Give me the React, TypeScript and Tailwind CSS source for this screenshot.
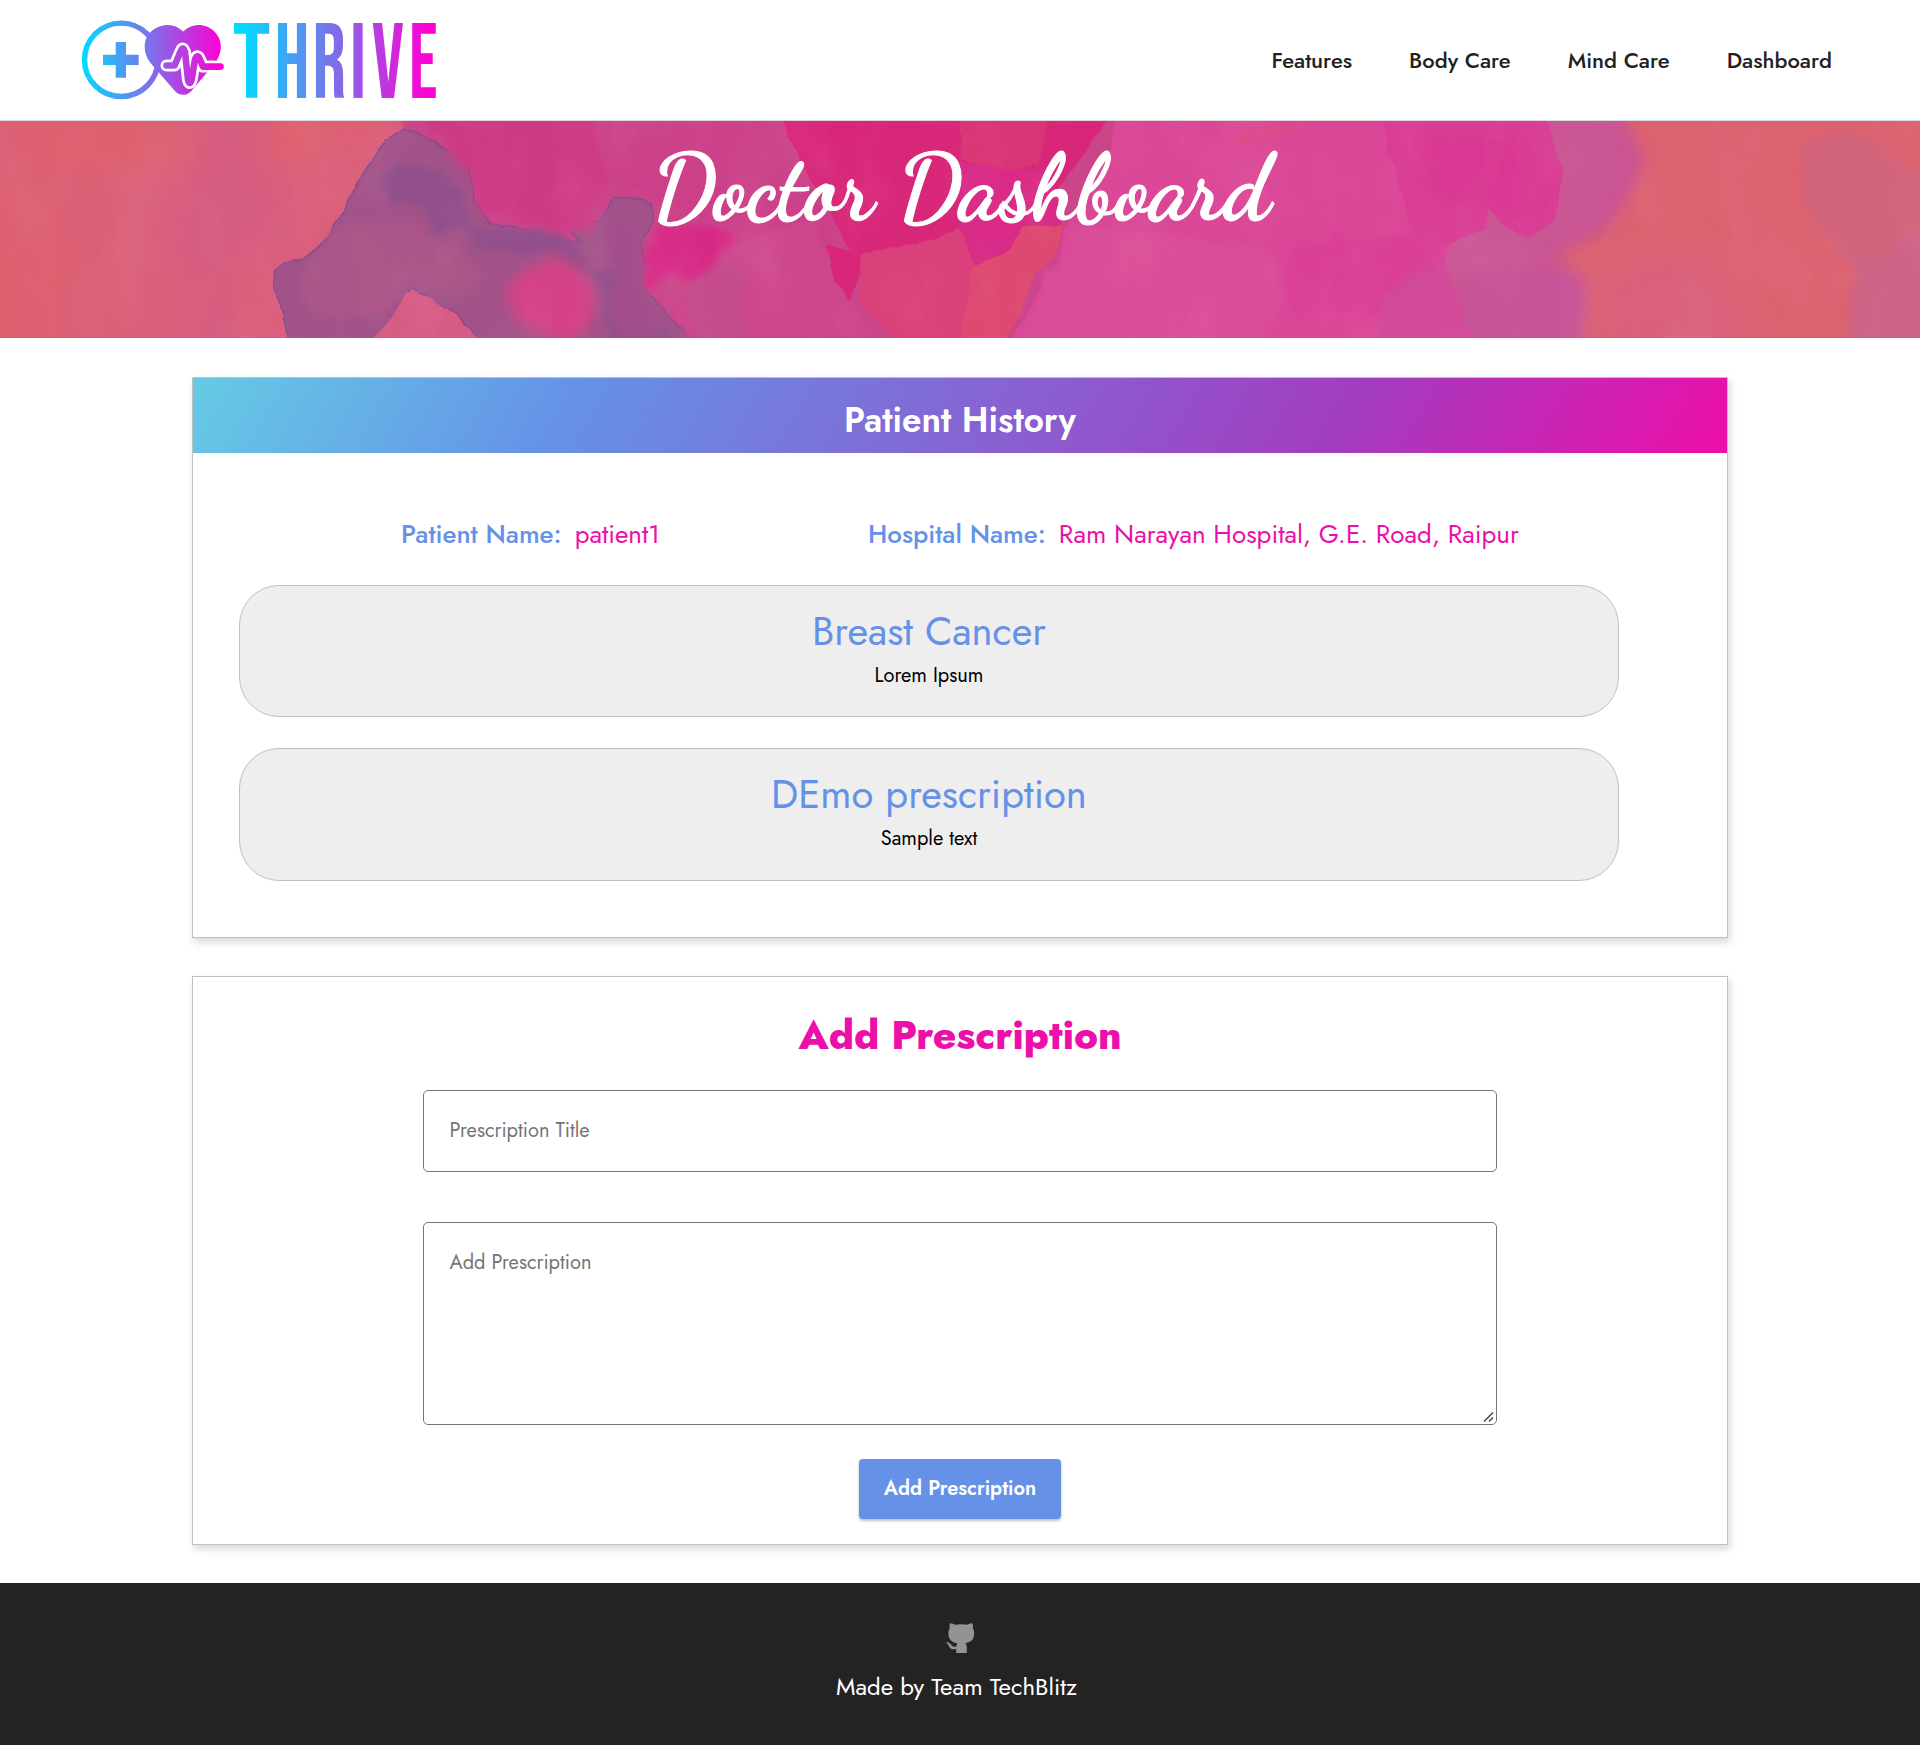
const navLinks = ["Features", "Body Care", "Mind Care", "Dashboard"];
const history = [
  { title: "Breast Cancer", text: "Lorem Ipsum" },
  { title: "DEmo prescription", text: "Sample text" },
];
const wordmark = [
  { letter: "T", x: 232.7, width: 37.7 },
  { letter: "H", x: 274.4, width: 34.95 },
  { letter: "R", x: 312.4, width: 33.5 },
  { letter: "I", x: 350, width: 16 },
  { letter: "V", x: 371.8, width: 32.2 },
  { letter: "E", x: 408.9, width: 28.5 },
];

function Logo() {
  return (
    <svg className="h-[84px] w-[362px] overflow-visible" viewBox="78 18 362 84" aria-label="Thrive">
      <defs>
        <linearGradient id="markFill" gradientUnits="userSpaceOnUse" x1="82" y1="0" x2="222" y2="0">
          <stop offset="0" stopColor="#00dcff" />
          <stop offset="1" stopColor="#ff00d4" />
        </linearGradient>
        <linearGradient id="wordFill" gradientUnits="userSpaceOnUse" x1="240" y1="0" x2="430" y2="0">
          <stop offset="0" stopColor="#00dcff" />
          <stop offset="1" stopColor="#ff00d4" />
        </linearGradient>
      </defs>
      <circle cx="121.2" cy="59.8" r="36.7" fill="none" stroke="url(#markFill)" strokeWidth="5.4" />
      <path d="M115.7 42h10.3v12.7h12.7V65H126v12.7h-10.3V65H103V54.7h12.7Z" fill="url(#markFill)" />
      <path
        d="M183.2 31.6C178.5 27 173.500 25 168 25C155 25 144.700 34.500 144.700 46.500C144.700 54 147.600 59.500 152 64.700L174.500 90.500C179 96 186.500 96.300 191.200 91.200L212.500 66C218 59.500 220.800 54 220.800 46.500C220.800 34.500 210.500 25 198.500 25C192.500 25 187.500 27.200 183.200 31.600Z"
        fill="url(#markFill)"
      />
      <g fill="none" strokeLinecap="round" strokeLinejoin="round">
        <path d="M166.500 65.500H174.600L180.600 51.200Q183 45.500 185 52L188 80Q189.700 86 191.600 80L195 59.300Q197.400 53.500 199.800 59L203 66.600H214" stroke="#fff" strokeWidth="12" />
        <path d="M166.500 65.500H174.600L180.600 51.200Q183 45.500 185 52L188 80Q189.700 86 191.600 80L195 59.300Q197.400 53.500 199.800 59L203 66.600H220.500" stroke="url(#markFill)" strokeWidth="6.600" />
      </g>
      <g fill="url(#wordFill)" fontSize="106.700" className="font-['Bebas_Neue','Roboto_Condensed',sans-serif]">
        {wordmark.map((glyph) => (
          <text key={glyph.letter} x={glyph.x} y="97.700" textLength={glyph.width} lengthAdjust="spacingAndGlyphs">{glyph.letter}</text>
        ))}
      </g>
    </svg>
  );
}

function Watercolor() {
  return (
    <svg className="absolute inset-0 h-full w-full" viewBox="0 0 1920 217" preserveAspectRatio="none" aria-hidden="true">
      <defs>
        <filter id="rough" x="-5%" y="-10%" width="110%" height="120%">
          <feTurbulence type="fractalNoise" baseFrequency="0.04" numOctaves="4" seed="4" result="n" />
          <feDisplacementMap in="SourceGraphic" in2="n" scale="7" xChannelSelector="R" yChannelSelector="G" />
        </filter>
        <filter id="washed" x="-10%" y="-15%" width="120%" height="130%">
          <feTurbulence type="fractalNoise" baseFrequency="0.03" numOctaves="4" seed="9" result="n" />
          <feDisplacementMap in="SourceGraphic" in2="n" scale="28" xChannelSelector="R" yChannelSelector="G" />
          <feGaussianBlur stdDeviation="3.5" />
        </filter>
        <filter id="soft" x="-30%" y="-30%" width="160%" height="160%"><feGaussianBlur stdDeviation="7" /></filter>
        <filter id="softer" x="-30%" y="-30%" width="160%" height="160%"><feGaussianBlur stdDeviation="16" /></filter>
        <filter id="grain" x="0" y="0" width="100%" height="100%">
          <feTurbulence type="fractalNoise" baseFrequency="0.018 0.01" numOctaves="5" seed="12" />
          <feColorMatrix values="0 0 0 0 0.9  0 0 0 0 0.38  0 0 0 0 0.55  1.6 0 0 0 -0.72" />
        </filter>
        <linearGradient id="wash" x1="0" x2="1" y1="0" y2="0">
          <stop offset="0" stopColor="#dc5f74" />
          <stop offset="0.06" stopColor="#db6077" />
          <stop offset="0.13" stopColor="#d75d80" />
          <stop offset="0.2" stopColor="#da5f7a" />
          <stop offset="0.24" stopColor="#cb4585" />
          <stop offset="0.34" stopColor="#cc4288" />
          <stop offset="0.5" stopColor="#d93381" />
          <stop offset="0.56" stopColor="#da4596" />
          <stop offset="0.8" stopColor="#d94196" />
          <stop offset="1" stopColor="#dc5f74" />
        </linearGradient>
      </defs>
      <rect width="1920" height="217" fill="url(#wash)" />
      <g filter="url(#softer)">
        <ellipse cx="110" cy="25" rx="90" ry="26" fill="#de606d" />
        <ellipse cx="30" cy="150" rx="30" ry="70" fill="#dd616c" />
        <ellipse cx="325" cy="20" rx="60" ry="35" fill="#df606b" />
        <ellipse cx="220" cy="110" rx="40" ry="90" fill="#d65c82" />
        <ellipse cx="265" cy="180" rx="60" ry="50" fill="#dc5e7a" />
        <ellipse cx="345" cy="70" rx="40" ry="70" fill="#db5f78" />
      </g>
      <g filter="url(#washed)">
        <path d="M205 -5L212 60L206 120L212 170L196 225H236L240 -5Z" fill="#d75d80" />
        <path d="M62 70L66 150L60 225H0V70Z" fill="#dd616f" />
      </g>
      <g filter="url(#rough)">
        <path d="M400 -5L408 14L470 40L474 80L490 105L570 122L590 75L610 80L640 100L645 180L690 225H1230L1180 -5Z" fill="#cb4489" />
        <path d="M405 8L380 28L358 60L342 92L324 120L312 134L304 138L284 142L274 150L275 170L284 190L288 225H366L392 200L404 178L411 168L428 176L458 192L466 206L486 225H700L662 190L644 165L642 125L655 100L650 80L612 76L600 100L570 108L580 122L550 115L520 109L490 102L474 76L468 42L430 18Z" fill="#a15289" stroke="#864c90" strokeWidth="1.500" />
      </g>
      <g filter="url(#washed)">
        <path d="M404 -12L440 14L468 45L478 84L510 96L560 119L592 108L600 70L605 20L590 -12Z" fill="#cd3b84" />
        <path d="M392 40L440 50L466 74L474 110L436 108L402 84L384 62Z" fill="#914f8b" />
        <path d="M340 104L390 98L440 118L480 144L474 180L412 156L380 190L310 200L300 150Z" fill="#aa5587" />
        <path d="M470 104L560 118L592 140L630 180L690 228H614L596 150L560 136L480 126Z" fill="#92508c" />
        <path d="M602 92L640 104L644 165L670 200L630 222L606 160Z" fill="#a34f8b" />
      </g>
      <path d="M406 172L390 200L368 222H484L464 205L456 192L430 176Z" fill="#d75c84" filter="url(#rough)" />
      <path d="M505 170Q520 145 560 136Q590 150 596 180Q592 212 570 222Q512 212 505 170Z" fill="#d44385" filter="url(#soft)" />
      <path d="M655 102L735 108L728 140L700 158L664 156L648 172L642 140Z" fill="#d72c86" filter="url(#washed)" />
      <g filter="url(#washed)">
        <path d="M600 20L690 0L770 0L800 60L840 100L840 130L740 110L650 80L610 60Z" fill="#cb4089" />
        <path d="M735 120L820 100L845 180L880 228H700L680 190Z" fill="#ce478d" />
        <path d="M690 160L730 140L760 228H690Z" fill="#c44b8d" />
      </g>
      <g filter="url(#rough)">
        <path d="M780 -5L800 40L830 90L850 130L826 122L834 160L850 180L866 132L930 124L975 100L1030 110L1110 -5Z" fill="#d82879" />
        <path d="M862 134L935 118L970 106L985 145L1005 225H900L860 180Z" fill="#da4179" />
        <path d="M960 40L1050 50L1062 105L1020 108L1015 130L975 144L960 110Z" fill="#d82a86" />
        <path d="M960 -5H1048L1040 40L1010 50L960 38Z" fill="#d93475" />
        <path d="M1022 106L1064 104L1056 130L1036 155L1005 222H960L972 146L1012 126Z" fill="#dd4871" />
        <path d="M1116 -5L1110 30L1066 105L1055 145L1008 225H1480L1440 -5Z" fill="#da4697" />
        <path d="M1380 -5H1545L1562 50L1555 100L1528 116L1505 105L1488 90L1480 112L1450 122L1420 140Z" fill="#d93d94" />
      </g>
      <g filter="url(#washed)">
        <path d="M1140 110L1260 125L1280 150L1270 224H1016L1058 146L1076 110Z" fill="#da4d98" />
        <path d="M1400 10L1530 20L1545 80L1520 96L1430 70Z" fill="#d93792" />
        <path d="M1285 120L1440 110L1450 170L1400 200L1290 190Z" fill="#da4095" />
        <path d="M1232 12L1280 5L1292 12L1236 28Z" fill="#db4a84" />
        <path d="M1400 165L1450 140L1470 224H1370Z" fill="#d14a99" />
      </g>
      <path d="M1546 -5L1562 50L1555 99L1529 116L1505 106L1488 88L1484 110L1450 122L1446 145L1462 185L1474 225H1600L1680 90L1630 -5Z" fill="#ca5593" filter="url(#rough)" />
      <path d="M1456 152L1500 146L1560 155L1590 180L1580 226H1476L1462 185Z" fill="#c55297" filter="url(#washed)" />
      <path d="M1622 -10L1645 40L1628 78L1603 112L1556 136L1588 158L1590 190L1580 227H1930V-10Z" fill="#dc6270" filter="url(#soft)" />
      <g filter="url(#softer)">
        <path d="M1600 150L1700 130L1760 225H1600Z" fill="#da607c" />
      </g>
      <g filter="url(#washed)">
        <path d="M1800 30L1830 10L1870 14L1890 40L1935 50V228H1850L1856 150L1810 90Z" fill="#d1647a" />
        <path d="M1858 140L1930 110V228H1846Z" fill="#cc6484" />
      </g>
      <rect width="1920" height="217" filter="url(#grain)" opacity="0.14" />
    </svg>
  );
}

function GithubCat() {
  return (
    <svg className="h-[30px] w-[29px]" viewBox="0 0 29 30" fill="#939393" aria-hidden="true">
      <path d="M4.200 .2C6 .1 7.600 1 9 1.800C12.500 1.100 17.500 1.100 21 1.800C22.400 1 24.500 .1 26.200 .2C27.200 2 27.200 4 26.800 5.200C28.600 7.600 28.600 12 27.200 15.200C26 18 23 19.600 19.400 20.200C20.400 21.400 20.800 23 20.800 25V30H10.200V26C6 27 4 25.600 3 23.200C2.200 21.400 1.200 20.200 .2 19.400C2.200 18.600 4 20 5 21.600C6.200 23.400 7.600 24.200 10.200 23.600C10.400 22 10.800 21 11.400 20.200C7.600 19.600 4.800 18.200 3.400 15.200C2 12 2 7.600 3.800 5.200C3.200 3.600 3.400 1.800 4.200 .2Z" />
    </svg>
  );
}

export default function App() {
  return (
    <div className="min-h-[1745px] bg-white font-[Jost,Lato,sans-serif] text-black">
      <header className="flex h-[121px] items-center justify-between border-b border-[#d9d9d9] pr-[88px] pl-[78px]">
        <Logo />
        <nav className="flex gap-[57px] text-[22px] font-medium leading-8 text-[#222]">
          {navLinks.map((link) => (
            <a key={link} href="#">{link}</a>
          ))}
        </nav>
      </header>

      <section className="relative flex h-[217px] justify-center overflow-hidden bg-[#d94088]">
        <Watercolor />
        <h1 className="relative pt-[10px] pl-[2px] font-['Dancing_Script',cursive] text-[92px] font-bold leading-[115px] text-white [-webkit-text-stroke:1px_white]">Doctor Dashboard</h1>
      </section>

      <main className="mx-auto flex w-[1536px] flex-col gap-[38px] pt-[39px] pb-[38px]">
        <section className="h-[561px] border border-[#c0c0c0] shadow-[2px_4px_8px_rgba(0,0,0,0.16)]">
          <h2 className="h-[75px] bg-[linear-gradient(120deg,#65cbe5_0%,#6591e7_25%,#a33cbf_75%,#ee0ea9_100%)] pt-[9px] text-center text-[35px] font-semibold leading-[67px] text-white">Patient History</h2>
          <div className="mt-[61px] mb-[31px] flex justify-evenly text-[26px] leading-10">
            <p className="text-[#ec0fa9]"><span className="mr-[13px] font-medium text-[#6591e7]">Patient Name:</span>patient1</p>
            <p className="text-[#ec0fa9]"><span className="mr-[13px] font-medium text-[#6591e7]">Hospital Name:</span>Ram Narayan Hospital, G.E. Road, Raipur</p>
          </div>
          <ul className="ml-[46px] flex w-[1380px] flex-col gap-[31px]">
            {history.map((item) => (
              <li key={item.title} className="h-[132.4px] rounded-[40px] border border-[#c0c0c0] bg-[#eee] pt-[16px] text-center">
                <h3 className="text-[40px] leading-[58px] text-[#6591e7]">{item.title}</h3>
                <p className="pt-px text-[20px] leading-[29px]">{item.text}</p>
              </li>
            ))}
          </ul>
        </section>

        <section className="flex h-[569px] flex-col items-center border border-[#c0c0c0] shadow-[2px_4px_8px_rgba(0,0,0,0.16)]">
          <h2 className="mt-[28px] text-[40px] font-extrabold leading-[60px] text-[#ec0fa9]">Add Prescription</h2>
          <input placeholder="Prescription Title" className="mt-[25px] h-[82px] w-[1074px] rounded-[5px] border border-[#767676] px-[25.5px] pb-[2px] text-[20px] placeholder:text-[#757575]" />
          <div className="relative mt-[50px] h-[203px] w-[1074px]">
            <textarea placeholder="Add Prescription" className="h-full w-full resize-none rounded-[5px] border border-[#767676] px-[25.5px] py-[25px] text-[20px] leading-[29px] placeholder:text-[#757575]" />
            <svg className="absolute right-[3px] bottom-[3px] h-[10px] w-[11px]" viewBox="0 0 11 10" stroke="#4a4a4a" strokeWidth="1.500" aria-hidden="true">
              <path d="M1 9.500L10 .5M6 9.500L10 5.500" />
            </svg>
          </div>
          <button className="mt-[34px] h-[60px] w-[202px] rounded-[4px] bg-[#6591e7] text-[20px] font-semibold text-white shadow-[0_2px_3px_rgba(0,0,0,0.25)]">Add Prescription</button>
        </section>
      </main>

      <footer className="flex h-[162px] flex-col items-center bg-[#232323] pt-[40px] text-white">
        <GithubCat />
        <p className="mt-[15px] mr-[7px] text-[24px] leading-[38px]">Made by Team TechBlitz</p>
      </footer>
    </div>
  );
}
